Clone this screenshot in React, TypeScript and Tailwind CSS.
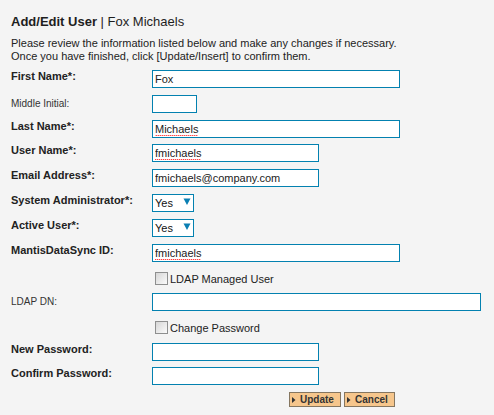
import React from "react";

const inputBase =
  "block h-[18px] border border-[#0381b0] bg-white px-[2px] text-[11px] leading-[16px] text-[#222] outline-none";

function Label({ children, bold = true }: { children: React.ReactNode; bold?: boolean }) {
  return bold ? (
    <div className="w-[141px] shrink-0 text-[11px] font-bold leading-[13px] text-[#222]">{children}</div>
  ) : (
    <div className="w-[141px] shrink-0 pt-[2px] text-[10px] leading-[13px] text-[#333]">{children}</div>
  );
}

function Field({ value, w, spell = false, bg = "bg-white" }: { value: string; w: string; spell?: boolean; bg?: string }) {
  return (
    <div className={`relative h-[18px] ${w}`}>
      <input spellCheck={false} defaultValue={value} className={`${inputBase} ${bg} w-full`} />
      {spell && (
        <span className="pointer-events-none absolute left-[3px] top-[1px] z-10 h-[15px] bg-[linear-gradient(to_right,#ff0000_50%,transparent_50%)] bg-[length:2px_1px] bg-bottom bg-repeat-x text-[11px] leading-[14px] text-transparent">
          {value}
        </span>
      )}
    </div>
  );
}

function Select() {
  return (
    <div
      role="combobox"
      aria-expanded="false"
      className="relative flex h-[18px] w-[42px] items-center border border-[#0381b0] bg-white pl-[2px] text-[11px] leading-[16px] text-[#111]"
    >
      Yes
      <svg className="pointer-events-none absolute left-[30px] top-[3px]" width="8" height="8" viewBox="0 0 8 8">
        <path d="M0.5 0.5 H7.5 L4 7 Z" fill="#0a7fb3" />
      </svg>
    </div>
  );
}

function Checkbox({ label }: { label: string }) {
  return (
    <div className="flex items-start pl-[3px]">
      <span className="block h-[13px] w-[13px] border border-[#8e8f8f] bg-gradient-to-br from-[#d6d6d6] to-[#fbfbfb]" />
      <span className="ml-[2px] pt-[1px] text-[11px] leading-[13px] text-[#222]">{label}</span>
    </div>
  );
}

function Button({ label, w }: { label: string; w: string }) {
  return (
    <button
      type="button"
      className={`flex h-[15px] items-center border border-[#857660] bg-[#f6c68c] pl-[2px] text-[10px] font-bold leading-[13px] text-[#333] ${w}`}
    >
      <svg width="4" height="6" viewBox="0 0 4 6" className="mr-[4px] shrink-0">
        <path d="M0 0 L3.5 3 L0 6 Z" fill="#333" />
      </svg>
      {label}
    </button>
  );
}

export default function App() {
  return (
    <div className="min-h-screen w-full bg-[#f4f4f4] pl-[11px] pt-[13px] font-['Liberation_Sans',Arial,sans-serif] text-[#222]">
      <h1 className="text-[13px] leading-[17px] text-[#1e1e1e]">
        <span className="font-bold">Add/Edit User</span> | Fox Michaels
      </h1>
      <p className="mt-[7px] text-[11px] leading-[13px] text-[#222]">
        Please review the information listed below and make any changes if necessary.
        <br />
        Once you have finished, click [Update/Insert] to confirm them.
      </p>

      <div className="mt-[7px] flex flex-col">
        <div className="flex h-[25px]">
          <Label>First Name*:</Label>
          <Field value="Fox" w="w-[248px]" />
        </div>
        <div className="flex h-[25px]">
          <Label bold={false}>Middle Initial:</Label>
          <Field value="" w="w-[45px]" />
        </div>
        <div className="flex h-[24px]">
          <Label>Last Name*:</Label>
          <Field value="Michaels" w="w-[248px]" spell />
        </div>
        <div className="flex h-[25px]">
          <Label>User Name*:</Label>
          <Field value="fmichaels" w="w-[167px]" spell />
        </div>
        <div className="flex h-[25px]">
          <Label>Email Address*:</Label>
          <Field value="fmichaels@company.com" w="w-[167px]" />
        </div>
        <div className="flex h-[25px]">
          <Label>System Administrator*:</Label>
          <Select />
        </div>
        <div className="flex h-[25px]">
          <Label>Active User*:</Label>
          <Select />
        </div>
        <div className="flex h-[28px]">
          <Label>MantisDataSync ID:</Label>
          <Field value="fmichaels" w="w-[248px]" spell />
        </div>
        <div className="flex h-[21px]">
          <div className="w-[141px] shrink-0" />
          <Checkbox label="LDAP Managed User" />
        </div>
        <div className="flex h-[28px]">
          <Label bold={false}>LDAP DN:</Label>
          <Field value="" w="w-[329px]" bg="bg-[#f4f4f4]" />
        </div>
        <div className="flex h-[22px]">
          <div className="w-[141px] shrink-0" />
          <Checkbox label="Change Password" />
        </div>
        <div className="flex h-[24px]">
          <Label>New Password:</Label>
          <input type="password" defaultValue="" className={`${inputBase} w-[167px] bg-[#f4f4f4]`} />
        </div>
        <div className="flex h-[25px]">
          <Label>Confirm Password:</Label>
          <input type="password" defaultValue="" className={`${inputBase} w-[167px] bg-[#f4f4f4]`} />
        </div>
        <div className="flex gap-[3px] pl-[278px]">
          <Button label="Update" w="w-[52px]" />
          <Button label="Cancel" w="w-[51px]" />
        </div>
      </div>
    </div>
  );
}
